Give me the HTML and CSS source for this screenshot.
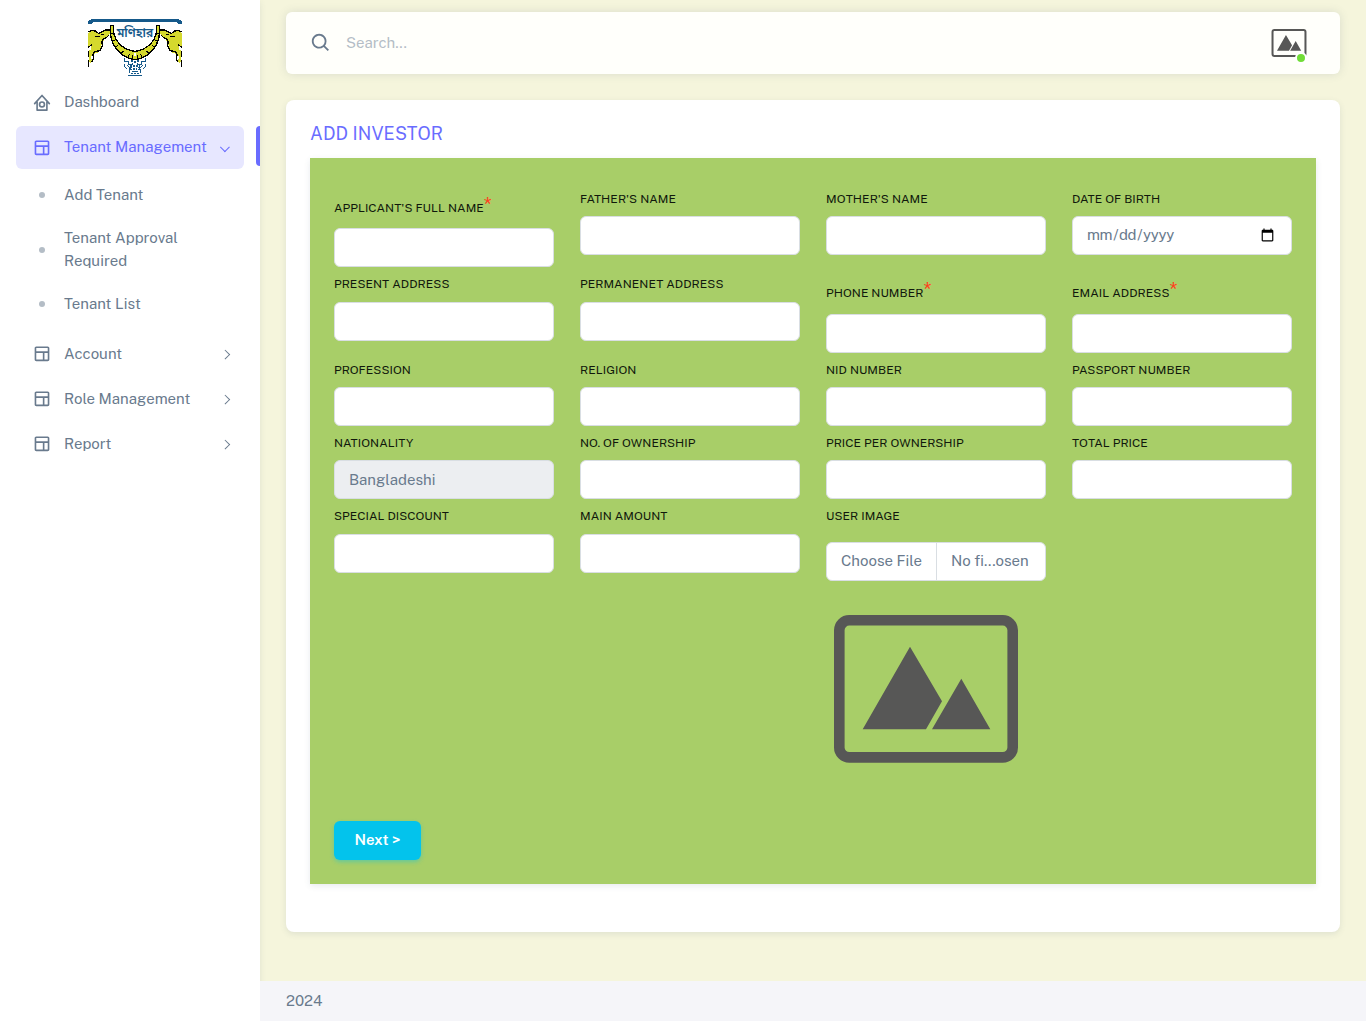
FILE: index.html
```html
<!DOCTYPE html>
<html lang="en">
<head>
<meta charset="utf-8">
<title>Add Investor</title>
<link rel="stylesheet" href="styles.css">
</head>
<body>
<svg width="0" height="0" class="defs">
  <symbol id="layout" viewBox="0 0 24 24"><path d="M19 3H5c-1.103 0-2 .897-2 2v14c0 1.103.897 2 2 2h14c1.103 0 2-.897 2-2V5c0-1.103-.897-2-2-2zm0 2 .001 4H5V5h14zM5 11h8v8H5v-8zm10 8v-8h4.001l.001 8H15z"/></symbol>
  <symbol id="home" viewBox="0 0 24 24"><path d="M3 13 12 3l9 10M6 11v10h12V11" fill="none" stroke="currentColor" stroke-width="2" stroke-linejoin="round" stroke-linecap="round"/><circle cx="12" cy="14" r="3" fill="none" stroke="currentColor" stroke-width="2"/></symbol>
  <symbol id="picture" viewBox="0 0 200 200"><rect x="13.300" y="31.300" width="173.400" height="137.100" rx="10" fill="none" stroke="#575756" stroke-width="10.600"/><path fill="#575756" d="M84 57.700 36.700 140.300H100l16-28zM135.300 89.700 106 140.300h58.300z"/></symbol>
</svg>
<div class="layout">
  <aside class="sidebar">
    <div class="brand">
      <svg class="logo" viewBox="0 0 390 225" shape-rendering="crispEdges">
        <path d="M54 42V35l9-7H327l9 7v7h-9l-9-6H72l-9 6z" fill="#15598a"/>
        <g id="bearer">
          <path d="M55 68l10-4 12 1 8 7 12-5 12-5 10-1v10l-6 8-9 4-3 10-6 9-3 12-9 14-15 5-5 8 3 12-4 6-6-3 3-14-4-13 9-12-1-9-10 8z" fill="#d5d92e"/>
          <path d="M55 66l10-4 12 1 8 7 12-5 8-5h14M118 74l-8 8-10 5-5 8 3 12-9 15-15 3-5 9 2 12-5 10M55 112l10-8M55 124v18M56 150v22" fill="none" stroke="#000" stroke-width="4"/>
          <path d="M56 122l7-3 2 12-6 16-3 3z" fill="#d5d92e"/>
          <path d="M74 78l9 3 8-3M92 72l9 3" fill="none" stroke="#000" stroke-width="3"/>
        </g>
        <use href="#bearer" transform="matrix(-1 0 0 1 390 0)"/>
        <path d="M122 46l8 0c-2 24 5 41 17 54c14 15 28 22 48 24c20-2 34-9 48-24c12-13 19-30 17-54h8c4 30-4 56-20 74c-14 17-31 26-53 29c-22-3-39-12-53-29c-16-18-24-44-20-74z" fill="#d5d92e" stroke="#000" stroke-width="4"/>
        <path d="M121 70h7M127 92l7-2M138 110l7-5M155 129l6-7M174 142l4-10M188 134v12M202 134v12M216 142l-4-10M235 129l-6-7M252 110l-7-5M263 92l-7-2M262 70h7" stroke="#000" stroke-width="3"/>
        <path d="M195 128v10" stroke="#fff" stroke-width="6"/>
        <g fill="none" stroke="#15598a" stroke-width="3">
          <path d="M163 144v9h12v9h12M227 144v9h-12v9h-12M163 162v8l9 6M227 162v8l-9 6M184 171l-6 9v9M206 171l6 9v9M174 196h42M187 183h16M172 165l12 15M218 165l-12 15"/>
          <path d="M184 152l22 12M206 152l-22 12M180 168h30M188 176h14M184 190h22" stroke-width="5" stroke-dasharray="6 3"/>
        </g>
        <text class="logo-text" x="195" y="82" text-anchor="middle" textLength="110" lengthAdjust="spacingAndGlyphs">মণিহার</text>
      </svg>
    </div>
    <nav class="menu">
      <a class="item"><svg class="icon"><use href="#home"/></svg><span>Dashboard</span></a>
      <a class="item active"><svg class="icon"><use href="#layout"/></svg><span>Tenant Management</span><i class="chevron down"></i></a>
      <div class="submenu">
        <a class="sub"><span>Add Tenant</span></a>
        <a class="sub"><span>Tenant Approval<br>Required</span></a>
        <a class="sub"><span>Tenant List</span></a>
      </div>
      <a class="item"><svg class="icon"><use href="#layout"/></svg><span>Account</span><i class="chevron"></i></a>
      <a class="item"><svg class="icon"><use href="#layout"/></svg><span>Role Management</span><i class="chevron"></i></a>
      <a class="item"><svg class="icon"><use href="#layout"/></svg><span>Report</span><i class="chevron"></i></a>
    </nav>
  </aside>
  <div class="page">
    <header class="navbar">
      <svg class="search-icon" viewBox="0 0 24 24"><path d="M10 18a7.952 7.952 0 0 0 4.897-1.688l4.396 4.396 1.414-1.414-4.396-4.396A7.952 7.952 0 0 0 18 10c0-4.411-3.589-8-8-8s-8 3.589-8 8 3.589 8 8 8zm0-14c3.309 0 6 2.691 6 6s-2.691 6-6 6-6-2.691-6-6 2.691-6 6-6z"/></svg>
      <span class="search">Search...</span>
      <div class="avatar"><svg><use href="#picture"/></svg><i class="online"></i></div>
    </header>
    <main class="card">
      <h1>ADD INVESTOR</h1>
      <form class="panel">
        <div class="grid">
          <div><label class="required">Applicant's Full Name<sup>*</sup></label><input type="text"></div>
          <div><label>Father's Name</label><input type="text"></div>
          <div><label>Mother's Name</label><input type="text"></div>
          <div><label>Date of Birth</label><input type="date"></div>
          <div><label>Present Address</label><input type="text"></div>
          <div><label>Permanenet Address</label><input type="text"></div>
          <div><label class="required">Phone Number<sup>*</sup></label><input type="text"></div>
          <div><label class="required">Email Address<sup>*</sup></label><input type="text"></div>
          <div><label>Profession</label><input type="text"></div>
          <div><label>Religion</label><input type="text"></div>
          <div><label>NID Number</label><input type="text"></div>
          <div><label>Passport Number</label><input type="text"></div>
          <div><label>Nationality</label><input type="text" value="Bangladeshi" readonly></div>
          <div><label>No. of Ownership</label><input type="text"></div>
          <div><label>Price Per Ownership</label><input type="text"></div>
          <div><label>Total Price</label><input type="text"></div>
          <div><label>Special Discount</label><input type="text"></div>
          <div><label>Main Amount</label><input type="text"></div>
          <div><label>User Image</label>
            <div class="file"><span class="choose">Choose File</span><span class="name">No fi...osen</span></div>
            <svg class="preview"><use href="#picture"/></svg>
          </div>
        </div>
        <button type="button" class="next">Next &gt;</button>
      </form>
    </main>
    <footer>2024</footer>
  </div>
</div>
</body>
</html>
```
FILE: styles.css
```css
* { box-sizing: border-box; }
body {
  margin: 0;
  background: #f5f5dc;
  color: #697a8d;
  font: 400 15px/22.95px "Public Sans", Inter, sans-serif;
}
.defs { position: absolute; }
.layout { display: flex; height: 1021px; }

.sidebar {
  width: 260px;
  flex: none;
  background: #fff;
  box-shadow: 0 2px 6px rgba(67, 89, 113, 0.12);
}
.brand { padding: 10px 0 0 70px; height: 81px; }
.logo { display: block; width: 130px; height: 75px; }
.logo-text { font: 600 36px "Noto Sans Bengali", "Noto Sans", sans-serif; fill: #15598a; }
.menu { display: flex; flex-direction: column; gap: 2px; }
.item {
  position: relative;
  display: flex;
  align-items: center;
  height: 43px;
  margin: 0 16px;
  padding: 0 16px;
  border-radius: 6px;
}
.icon { width: 20px; height: 20px; margin: 0 12px 0 0; fill: currentColor; }
.chevron {
  width: 6.5px;
  height: 6.5px;
  margin: 0 0 0 auto;
  border: solid currentColor;
  border-width: 1.2px 1.2px 0 0;
  transform: rotate(45deg);
}
.chevron.down { transform: rotate(135deg); }
.active { background: #e7e7ff; color: #696cff; }
.active::after {
  content: "";
  position: absolute;
  right: -16px;
  top: 0;
  width: 4px;
  height: 40px;
  border-radius: 4px 0 0 4px;
  background: #696cff;
}
.icon { padding-bottom: 0.4px; }
.submenu { padding: 3px 0 5px; }
.sub { display: flex; align-items: center; padding: 10px 16px 10px 39px; }
.sub::before { content: ""; width: 6px; height: 6px; margin-right: 19px; border-radius: 50%; background: #b4bdc6; }

.page { flex: 1; display: flex; flex-direction: column; padding-top: 12px; }
.navbar {
  display: flex;
  align-items: center;
  height: 62px;
  margin: 0 26px;
  padding: 0 31px 0 24px;
  border-radius: 6px;
  background: #fffffb;
  box-shadow: 0 0 10px rgba(67, 89, 113, 0.15);
}
.search-icon { width: 22px; height: 22px; fill: currentColor; }
.search { margin-left: 14px; color: #b4bdc6; }
.avatar { position: relative; width: 40px; height: 40px; margin-left: auto; padding: 1px; }
.avatar svg { display: block; width: 38px; height: 38px; }
.online {
  position: absolute;
  right: 2px;
  bottom: -1px;
  width: 12px;
  height: 12px;
  border: 2px solid #fff;
  border-radius: 50%;
  background: #71dd37;
}

.card {
  height: 832px;
  margin: 26px 26px 0;
  padding: 22px 24px 0;
  border-radius: 8px;
  background: #fff;
  box-shadow: 0 2px 6px rgba(67, 89, 113, 0.12);
}
h1 { margin: 0 0 12px; color: #696cff; font-size: 18px; line-height: 24px; font-weight: 400; letter-spacing: 0.1px; }
.panel {
  display: flex;
  flex-direction: column;
  justify-content: space-between;
  align-items: flex-start;
  height: 726px;
  padding: 32px 24px 24px;
  background: #a8ce68;
  box-shadow: 0 2px 6px rgba(67, 89, 113, 0.12);
}
.grid { display: grid; grid-template-columns: repeat(4, 220px); gap: 8px 26px; }
label {
  display: block;
  height: 18.36px;
  margin-bottom: 8px;
  color: #10180c;
  font-size: 12px;
  line-height: 18.36px;
  letter-spacing: 0.05px;
  text-transform: uppercase;
}
.required { height: 30.4px; padding-top: 9px; }
sup { color: #ff3e1d; font-size: 20px; line-height: 0; vertical-align: 0; }
input, .file {
  display: block;
  width: 220px;
  height: 38.95px;
  border: 1px solid #d9dee3;
  border-radius: 6px;
  background: #fff;
  color: #697a8d;
  font: inherit;
}
input { padding: 7px 14px; outline: 0; }
input[type="date"] { padding-left: 13px; letter-spacing: -0.4px; }
input[readonly] { background: #eceef1; }
.file { display: flex; align-items: stretch; margin-top: 16px; }
.choose { width: 110px; padding-left: 14px; line-height: 35.5px; border-right: 1px solid #d9dee3; }
.name { padding-left: 14px; line-height: 35.5px; }
.preview { display: block; width: 200px; height: 200px; margin-top: 8px; }
.next {
  width: 87px;
  height: 39px;
  padding: 0 0 2px;
  border: 0;
  border-radius: 6px;
  background: #03c3ec;
  color: #fff;
  font: 600 15px/23px "Public Sans", Inter, sans-serif;
  box-shadow: 0 2px 4px rgba(3, 195, 236, 0.4);
}
footer { height: 40px; margin-top: auto; padding: 9px 26px; background: #f5f5f9; }
```
